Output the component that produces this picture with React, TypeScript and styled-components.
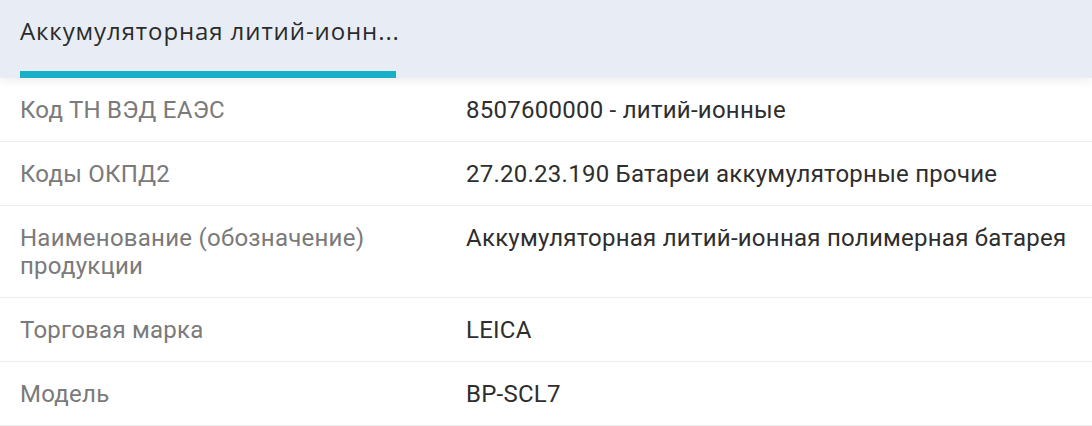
import React from 'react'
import styled, { createGlobalStyle } from 'styled-components'

const Global = createGlobalStyle`
  html, body {
    margin: 0;
    padding: 0;
    background: #ffffff;
  }
  body {
    font-family: Roboto, "Noto Sans", sans-serif;
  }
`

type Row = {
    label: string,
    value: string,
}

const rows: Row[] = [
    { label: 'Код ТН ВЭД ЕАЭС', value: '8507600000 - литий-ионные' },
    { label: 'Коды ОКПД2', value: '27.20.23.190 Батареи аккумуляторные прочие' },
    { label: 'Наименование (обозначение) продукции', value: 'Аккумуляторная литий-ионная полимерная батарея' },
    { label: 'Торговая марка', value: 'LEICA' },
    { label: 'Модель', value: 'BP-SCL7' },
]

const Page = styled.div`
    width: 1092px;
    height: 426px;
    overflow: hidden;
    background: #fff;
`

const TabBar = styled.div`
    position: relative;
    height: 78px;
    background: #e8edf5;
    padding-left: 20px;
    display: flex;
    align-items: flex-end;
    box-shadow: 0 3px 10px rgba(0, 0, 0, 0.07);
    z-index: 1;
`

const Tab = styled.div`
    width: 376px;
    height: 78px;
    box-sizing: border-box;
    padding-top: 15px;
    border-bottom: 7px solid #19afc6;
    font-family: "Open Sans", "Noto Sans", sans-serif;
    font-size: 24px;
    letter-spacing: 0.9px;
    line-height: 32px;
    color: #2b2b2b;
    white-space: nowrap;
`

const Table = styled.div`
    display: flex;
    flex-direction: column;
`

const TableRow = styled.div`
    display: grid;
    grid-template-columns: 446px 1fr;
    padding: 18px 20px 17px 20px;
    border-bottom: 1px solid #ececec;
    font-size: 24px;
    letter-spacing: 0.25px;
    line-height: 28px;
`

const Label = styled.div`
    color: #7a7a7a;
    padding-right: 60px;
`

const Value = styled.div`
    color: #2e2e2e;
`

export default function App() {
    return (
        <Page>
            <Global />
            <TabBar>
                <Tab>Аккумуляторная литий-ионн...</Tab>
            </TabBar>
            <Table>
                {rows.map((r) => (
                    <TableRow key={r.label}>
                        <Label>{r.label}</Label>
                        <Value>{r.value}</Value>
                    </TableRow>
                ))}
            </Table>
        </Page>
    )
}
